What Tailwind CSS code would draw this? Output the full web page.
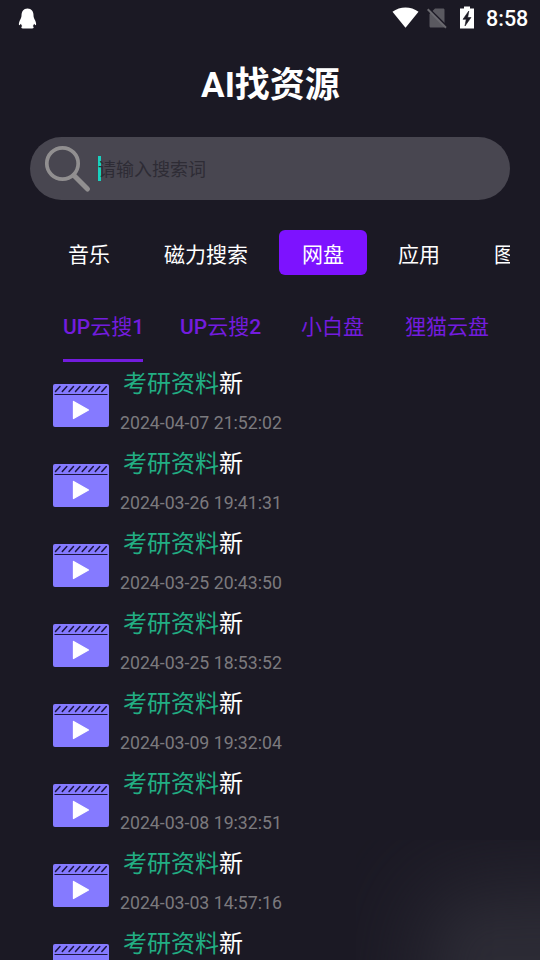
<!DOCTYPE html>
<html lang="zh-CN">

<head>
    <meta charset="UTF-8" />
    <title>AI找资源</title>
    <script src="https://cdn.jsdelivr.net/npm/@tailwindcss/browser@4"></script>
</head>

<body class="bg-[#1b1924] font-[Roboto,'Noto_Sans_CJK_SC',sans-serif] text-white">

    <div class="relative w-[540px] h-[960px] overflow-hidden flex flex-col">

        <!-- glow in the corner -->
        <div class="absolute right-0 bottom-0 w-[184px] h-[120px] overflow-hidden">
            <div class="w-[300px] h-[240px] ml-[95px] mt-[75px] bg-[#2c2b35] shadow-[0_0_90px_30px_#2c2b35] blur-[24px]"></div>
        </div>

        <!-- status bar -->
        <div class="relative h-[37px] shrink-0 flex items-center pl-[18px] pr-[12px]">
            <svg class="w-[19px] h-[21px] mb-px" viewBox="0 0 19 21" fill="#fff">
                <path d="M9.500 0.500C13.500 0.500 15.500 3.500 15.500 7.500C15.500 9.500 16.300 10.500 17.200 12.500C18.300 15 18.400 17.200 17.700 17.200C17 17.200 16.400 15.800 16 15.800C15.800 17 15.200 17.600 14.700 18.100C16.300 18.800 16 20.500 14 20.500H5C3 20.500 2.700 18.800 4.300 18.100C3.800 17.600 3.200 17 3 15.800C2.600 15.800 2 17.200 1.300 17.200C0.600 17.200 0.700 15 1.800 12.500C2.700 10.500 3.500 9.500 3.500 7.500C3.500 3.500 5.500 0.500 9.500 0.500Z" />
            </svg>
            <div class="ml-auto flex items-center">
                <svg class="w-[27px] h-[21px] mb-[3px]" viewBox="0 0 27 21" fill="#fff">
                    <path d="M13.500 20.700L0.500 4.800C8 -1.100 19 -1.100 26.500 4.800Z" />
                </svg>
                <svg class="w-[20px] h-[22px] ml-[8px] mb-[2px]" viewBox="0 0 20 22">
                    <path d="M8 1.500H16C17 1.500 17.500 2 17.500 3V19C17.500 20 17 20.500 16 20.500H4C3 20.500 2.500 20 2.500 19V7Z" fill="#5a5960" />
                    <path d="M1.500 1.200L20 19.700" stroke="#1b1924" stroke-width="2" />
                    <path d="M0.700 2.200L19 20.700" stroke="#6a696f" stroke-width="2" />
                </svg>
                <svg class="w-[14px] h-[23px] ml-[13px] mb-[3px]" viewBox="0 0 14 23">
                    <path d="M4 0.500H10V2.500H14V22.500H0V2.500H4Z" fill="#fff" />
                    <path d="M8.800 5L3 13.300H6.200L5 20L11 11.500H7.700Z" fill="#1b1924" stroke="#1b1924" stroke-width="0.600" />
                </svg>
                <span class="ml-[12px] text-[21.500px] font-medium leading-none w-[42px] whitespace-nowrap">8:58</span>
            </div>
        </div>

        <h1 class="relative mt-[24px] h-[50px] leading-[50px] pl-px text-center text-[35px] font-bold">AI找资源</h1>

        <!-- search box -->
        <div class="relative mt-[26px] mx-[30px] h-[63px] shrink-0 rounded-full bg-[#484650] flex items-center">
            <svg class="w-[48px] h-[48px] ml-[14px]" viewBox="0 0 48 48" fill="none" stroke="#918f90">
                <circle cx="18.500" cy="18.500" r="15.700" stroke-width="3.700" />
                <path d="M30 30.500L43.500 44" stroke-width="5" stroke-linecap="round" />
            </svg>
            <div class="ml-[6px] w-[3px] h-[25px] bg-[#19d1c0]"></div>
            <span class="-ml-[3px] mt-[2px] text-[18px] leading-[26px] text-[#2e2c35]">请输入搜索词</span>
        </div>

        <!-- category tabs -->
        <div class="relative mt-[30px] mx-[30px] pl-[15px] flex gap-2 shrink-0 overflow-hidden text-[21px] leading-[50px] whitespace-nowrap">
            <div class="px-[23px] h-[45px] shrink-0">音乐</div>
            <div class="px-[23px] h-[45px] shrink-0">磁力搜索</div>
            <div class="px-[23px] h-[45px] shrink-0 rounded-md bg-[#7d12ff]">网盘</div>
            <div class="px-[23px] h-[45px] shrink-0">应用</div>
            <div class="px-[23px] h-[45px] shrink-0">图片</div>
        </div>

        <!-- source tabs -->
        <div class="relative mt-[30px] pl-[63px] flex shrink-0 text-[21px] leading-[44px] text-[#731cde] whitespace-nowrap">
            <div class="w-[117px]">
                <div class="h-[54px] font-medium">UP<span class="font-normal">云搜</span>1</div>
                <div class="w-[80px] h-[3px] bg-[#731cde]"></div>
            </div>
            <div class="w-[121px] font-medium">UP<span class="font-normal">云搜</span>2</div>
            <div class="w-[104px]">小白盘</div>
            <div>狸猫云盘</div>
        </div>

        <!-- results -->
        <div id="list" class="relative mt-[4px]"></div>
    </div>

    <template id="row">
        <div class="h-[80px] pl-[53px] flex">
            <svg class="w-[56px] h-[43px] mt-[18px]" viewBox="0 0 56 43">
                <rect width="56" height="43" rx="2" fill="#857aff" />
                <path d="M2.500 7.500L7 2.500M9.300 7.500L13.800 2.500M16 7.500L20.500 2.500M22.500 7.500L27 2.500M29.200 7.500L33.700 2.500M35.800 7.500L40.300 2.500M42.300 7.500L46.800 2.500M48.800 7.500L53.300 2.500" stroke="#1b1740" stroke-width="1.500" stroke-linecap="round" />
                <path d="M1.500 10.500H54.500" stroke="#1b1740" stroke-width="1.200" />
                <path d="M20.500 17.500L35.500 26L20.500 34.500Z" fill="#fff" stroke="#fff" stroke-width="1.300" stroke-linejoin="round" />
            </svg>
            <div class="ml-[11px]">
                <div class="pl-[3px] pt-px text-[24px] leading-[34px]"><span class="text-[#22ae83]">考研资料</span>新</div>
                <div class="time mt-[11px] text-[17.700px] leading-[22px] text-[#7b7a7e]"></div>
            </div>
        </div>
    </template>

    <script>
        const times = [
            "2024-04-07 21:52:02",
            "2024-03-26 19:41:31",
            "2024-03-25 20:43:50",
            "2024-03-25 18:53:52",
            "2024-03-09 19:32:04",
            "2024-03-08 19:32:51",
            "2024-03-03 14:57:16",
            ""
        ];
        const list = document.getElementById("list");
        const row = document.getElementById("row");

        times.forEach(t => {
            const item = row.content.cloneNode(true);
            item.querySelector(".time").textContent = t;
            list.appendChild(item);
        });
    </script>

</body>

</html>
